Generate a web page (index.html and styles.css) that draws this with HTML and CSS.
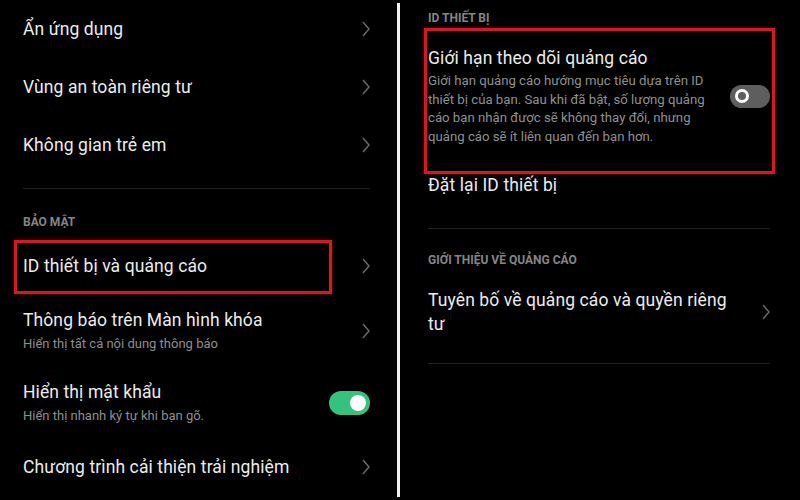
FILE: index.html
```html
<!DOCTYPE html>
<html lang="vi">
<head>
<meta charset="utf-8">
<title>Cài đặt</title>
<link rel="stylesheet" href="styles.css">
</head>
<body>
<div class="screen">
  <section class="panel left">
    <div class="row">
      <span class="title">Ẩn ứng dụng</span>
      <svg class="chev" viewBox="0 0 8 16"><polyline points="1,1 7,8 1,15"/></svg>
    </div>
    <div class="row">
      <span class="title">Vùng an toàn riêng tư</span>
      <svg class="chev" viewBox="0 0 8 16"><polyline points="1,1 7,8 1,15"/></svg>
    </div>
    <div class="row">
      <span class="title">Không gian trẻ em</span>
      <svg class="chev" viewBox="0 0 8 16"><polyline points="1,1 7,8 1,15"/></svg>
    </div>
    <hr class="sep sep-left">
    <div class="header h-security">BẢO MẬT</div>
    <div class="row row-hl">
      <span class="title">ID thiết bị và quảng cáo</span>
      <svg class="chev" viewBox="0 0 8 16"><polyline points="1,1 7,8 1,15"/></svg>
      <div class="highlight hl-left"></div>
    </div>
    <div class="row row-two">
      <div class="texts">
        <div class="title">Thông báo trên Màn hình khóa</div>
        <div class="sub">Hiển thị tất cả nội dung thông báo</div>
      </div>
      <svg class="chev" viewBox="0 0 8 16"><polyline points="1,1 7,8 1,15"/></svg>
    </div>
    <div class="row row-two row-pw">
      <div class="texts">
        <div class="title">Hiển thị mật khẩu</div>
        <div class="sub">Hiển thị nhanh ký tự khi bạn gõ.</div>
      </div>
      <div class="toggle on"><span class="knob"></span></div>
    </div>
    <div class="row">
      <span class="title">Chương trình cải thiện trải nghiệm</span>
      <svg class="chev" viewBox="0 0 8 16"><polyline points="1,1 7,8 1,15"/></svg>
    </div>
  </section>
  <div class="divider"></div>
  <section class="panel right">
    <div class="header h-device">ID THIẾT BỊ</div>
    <div class="row row-limit">
      <div class="texts">
        <div class="title">Giới hạn theo dõi quảng cáo</div>
        <div class="desc">Giới hạn quảng cáo hướng mục tiêu dựa trên ID thiết bị của bạn. Sau khi đã bật, số lượng quảng cáo bạn nhận được sẽ không thay đổi, nhưng quảng cáo sẽ ít liên quan đến bạn hơn.</div>
      </div>
      <div class="toggle off"><span class="knob"></span></div>
      <div class="highlight hl-right"></div>
    </div>
    <div class="row row-reset">
      <span class="title">Đặt lại ID thiết bị</span>
    </div>
    <hr class="sep sep-right">
    <div class="header h-about">GIỚI THIỆU VỀ QUẢNG CÁO</div>
    <div class="row row-policy">
      <span class="title policy">Tuyên bố về quảng cáo và quyền riêng tư</span>
      <svg class="chev" viewBox="0 0 8 16"><polyline points="1,1 7,8 1,15"/></svg>
    </div>
    <hr class="sep sep-right sep-bottom">
  </section>
</div>
</body>
</html>
```

FILE: styles.css
```css
* { box-sizing: border-box; }
html, body {
  margin: 0;
  padding: 0;
  background: #000;
}
body {
  font-family: Roboto, "Noto Sans", "DejaVu Sans", sans-serif;
  color: #ebebeb;
  width: 800px;
  height: 500px;
  overflow: hidden;
}
.screen {
  display: flex;
  width: 800px;
  height: 500px;
}
.panel {
  display: flex;
  flex-direction: column;
}
.left {
  width: 397px;
  padding: 0 27px 0 23px;
}
.right {
  width: 400px;
  padding: 0 30px 0 28px;
}
.divider {
  width: 3px;
  margin: 3px 0 3px 0;
  background: #f2f2f2;
}
.row {
  position: relative;
  display: flex;
  align-items: center;
  justify-content: space-between;
  height: 58px;
  flex-shrink: 0;
}
.title {
  font-size: 17.5px;
  line-height: 24px;
  color: #ececec;
  letter-spacing: 0.1px;
}
.sub {
  font-size: 13px;
  line-height: 20px;
  color: #8e8e8e;
  margin-top: 2px;
}
.chev {
  width: 8px;
  height: 16px;
  flex-shrink: 0;
}
.chev polyline {
  fill: none;
  stroke: #6c6c6c;
  stroke-width: 1.4;
}
.sep {
  border: 0;
  height: 1px;
  background: #222;
  margin: 0;
  flex-shrink: 0;
}
.sep-left { margin-top: 14px; }
.header {
  font-size: 12px;
  font-weight: 700;
  line-height: 24px;
  color: #858585;
  flex-shrink: 0;
}
.h-security { margin-top: 21px; }
.row-hl {
  margin-top: 6px;
  height: 52px;
}
.row-two {
  height: auto;
  padding: 16px 0 14px 0;
}
.row-pw { padding: 12px 0; }
.toggle {
  width: 41px;
  height: 24px;
  border-radius: 12px;
  display: flex;
  align-items: center;
  flex-shrink: 0;
}
.toggle.on {
  background: #34c27e;
  justify-content: flex-end;
  padding-right: 4px;
}
.toggle.on .knob {
  width: 16px;
  height: 16px;
  border-radius: 50%;
  background: #fff;
}
.toggle.off {
  background: #5e5e5e;
  padding-left: 5px;
  width: 40px;
  height: 23px;
}
.toggle.off .knob {
  width: 14px;
  height: 14px;
  border-radius: 50%;
  border: 3px solid #fff;
  background: #5e5e5e;
}
.highlight {
  position: absolute;
  border: 3px solid #d11a22;
  box-shadow: 0 0 3px rgba(220, 30, 40, 0.6);
  pointer-events: none;
}
.hl-left {
  left: -9px;
  top: 0;
  width: 318px;
  height: 54px;
}
.hl-right {
  left: -4px;
  top: -2px;
  width: 351px;
  height: 146px;
}
.h-device { margin-top: 6px; }
.row-limit {
  height: auto;
  padding: 16px 0 15px 0;
  align-items: center;
}
.row-limit .texts {
  width: 286px;
}
.desc {
  font-size: 13.2px;
  line-height: 18.5px;
  color: #909090;
  margin-top: 2px;
}
.row-reset {
  height: 48px;
}
.sep-right { margin-top: 19px; }
.h-about { margin-top: 19px; }
.row-policy {
  height: auto;
  padding: 16px 0 0 0;
}
.policy {
  width: 300px;
}
.sep-bottom { margin-top: 27px; }
```
